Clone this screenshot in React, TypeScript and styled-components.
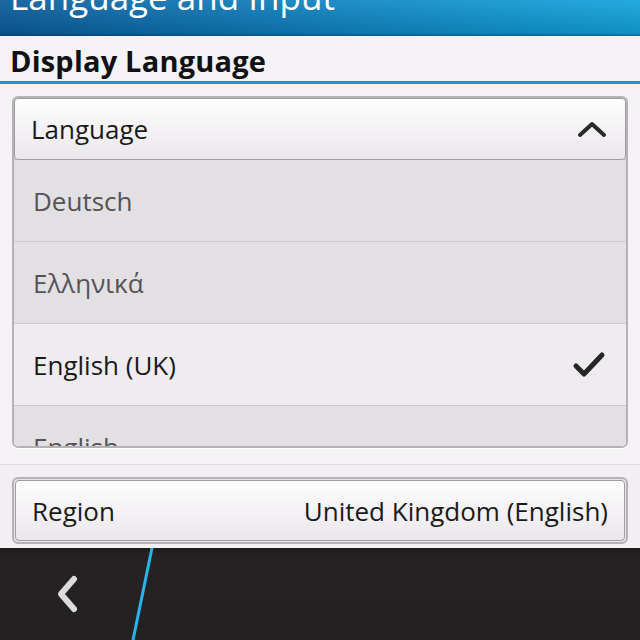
import styled, { createGlobalStyle } from 'styled-components';

const GlobalStyle = createGlobalStyle`
    html, body {
        margin: 0;
        padding: 0;
        background: #f4f2f4;
    }
    body {
        font-family: "Open Sans", "Noto Sans", sans-serif;
    }
`;

const Screen = styled.div`
    display: flex;
    flex-direction: column;
    width: 640px;
    height: 640px;
    overflow: hidden;
    background: #f4f2f4;
`;

const TitleBar = styled.header`
    height: 36px;
    flex-shrink: 0;
    overflow: hidden;
    padding-left: 10px;
    box-sizing: border-box;
    background:
        linear-gradient(to bottom, rgba(255, 255, 255, 0.08), rgba(0, 0, 0, 0.12) 92%, rgba(0, 30, 70, 0.45)),
        linear-gradient(to right, #0b5c9c, #0f86c4 55%, #12a4dc);
`;

const Title = styled.h1`
    margin: -21px 0 0;
    font-size: 35px;
    line-height: 35px;
    font-weight: 400;
    color: #ffffff;
    white-space: nowrap;
`;

const SectionHeader = styled.div`
    display: flex;
    align-items: center;
    height: 48px;
    padding: 4px 10px 0;
    box-sizing: border-box;
    border-bottom: 3px solid #1e93d4;
    flex-shrink: 0;
`;

const SectionTitle = styled.h2`
    margin: 0;
    font-size: 29px;
    font-weight: 700;
    color: #111;
    letter-spacing: 0.2px;
`;

const Content = styled.div`
    display: flex;
    flex-direction: column;
    padding: 12px 12px 0;
    flex: 1;
`;

const Frame = styled.div<{ $height: number }>`
    display: flex;
    flex-direction: column;
    height: ${({ $height }) => $height}px;
    box-sizing: border-box;
    border: 2px solid #b4b2b4;
    border-radius: 6px;
    background: #e3e0e3;
    overflow: hidden;
    box-shadow: 0 1px 0 #ffffff;
`;

const Button = styled.div`
    display: flex;
    align-items: center;
    justify-content: space-between;
    flex-shrink: 0;
    height: 62px;
    padding: 0 18px 0 16px;
    box-sizing: border-box;
    background: linear-gradient(to bottom, #fefdfe, #f4f2f4 50%, #e9e7e9);
    border: 1px solid #9f9d9f;
    border-radius: 4px;
    box-shadow: 0 1px 2px rgba(0, 0, 0, 0.25);
    font-size: 26px;
    color: #1a1a1a;
`;

const List = styled.div`
    display: flex;
    flex-direction: column;
    flex: 1;
    overflow: hidden;
`;

const Row = styled.div<{ $selected?: boolean }>`
    display: flex;
    align-items: center;
    justify-content: space-between;
    flex-shrink: 0;
    height: 82px;
    padding: 0 20px 0 19px;
    box-sizing: border-box;
    border-bottom: 1px solid #cdcacd;
    background: ${({ $selected }) => ($selected ? '#efecef' : '#e3e0e3')};
    font-size: 26px;
    color: ${({ $selected }) => ($selected ? '#1a1a1a' : '#555355')};
`;

const Divider = styled.div`
    height: 1px;
    margin: 16px -12px 0;
    background: #dcdadc;
    flex-shrink: 0;
`;

const RegionWrap = styled.div`
    padding-top: 12px;
    margin: 0 -12px;
    padding-left: 12px;
    padding-right: 12px;
    background: #f1eff1;
    flex: 1;
`;

const RegionFrame = styled.div`
    display: flex;
    flex-direction: column;
    box-sizing: border-box;
    border: 2px solid #b4b2b4;
    border-radius: 6px;
    padding: 1px;
    background: #e6e4e6;
`;

const RegionButton = styled(Button)`
    height: 61px;
    padding-right: 16px;
    box-shadow: none;
`;

const BottomBar = styled.footer`
    position: relative;
    display: flex;
    align-items: center;
    height: 92px;
    flex-shrink: 0;
    background: linear-gradient(to bottom, #1c1a1b, #252223 8%, #232122);
    overflow: hidden;
`;

const BackButton = styled.div`
    display: flex;
    align-items: center;
    justify-content: center;
    width: 134px;
    height: 100%;
`;

const Slash = styled.svg`
    position: absolute;
    left: 126px;
    top: 0;
`;

const ChevronUp = () => (
    <svg width="30" height="18" viewBox="0 0 30 18">
        <path d="M3 15 L15 4 L27 15" fill="none" stroke="#2a2a2a" strokeWidth="4" strokeLinecap="round" strokeLinejoin="round" />
    </svg>
);

const Check = () => (
    <svg width="34" height="30" viewBox="0 0 34 30">
        <path d="M4 16 L12 24 L30 5" fill="none" stroke="#262626" strokeWidth="5" strokeLinecap="round" strokeLinejoin="round" />
    </svg>
);

const BackChevron = () => (
    <svg width="26" height="40" viewBox="0 0 26 40">
        <path d="M20 5 L7 20 L20 35" fill="none" stroke="#dcdcdc" strokeWidth="6" strokeLinecap="round" strokeLinejoin="round" />
    </svg>
);

const languages = [
    { name: 'Deutsch' },
    { name: 'Ελληνικά' },
    { name: 'English (UK)', selected: true },
    { name: 'English' },
];

export default function App() {
    return (
        <>
            <GlobalStyle />
            <Screen>
                <TitleBar>
                    <Title>Language and Input</Title>
                </TitleBar>
                <SectionHeader>
                    <SectionTitle>Display Language</SectionTitle>
                </SectionHeader>
                <Content>
                    <Frame $height={352}>
                        <Button>
                            <span>Language</span>
                            <ChevronUp />
                        </Button>
                        <List>
                            {languages.map((lang) => (
                                <Row key={lang.name} $selected={lang.selected}>
                                    <span>{lang.name}</span>
                                    {lang.selected && <Check />}
                                </Row>
                            ))}
                        </List>
                    </Frame>
                    <Divider />
                    <RegionWrap>
                        <RegionFrame>
                            <RegionButton>
                                <span>Region</span>
                                <span>United Kingdom (English)</span>
                            </RegionButton>
                        </RegionFrame>
                    </RegionWrap>
                </Content>
                <BottomBar>
                    <BackButton>
                        <BackChevron />
                    </BackButton>
                    <Slash width="30" height="92" viewBox="0 0 30 92">
                        <line x1="26" y1="0" x2="7" y2="92" stroke="#2bb3ec" strokeWidth="3" />
                    </Slash>
                </BottomBar>
            </Screen>
        </>
    );
}
